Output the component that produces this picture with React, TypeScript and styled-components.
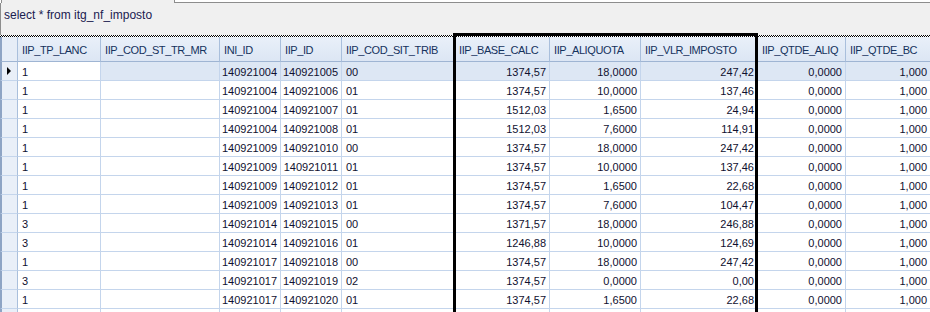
import React from "react";
import styled, { createGlobalStyle } from "styled-components";

const Global = createGlobalStyle`
  html, body { margin: 0; padding: 0; background: #ffffff; }
  body { font-family: "Liberation Sans", Arial, sans-serif; }
`;

const Page = styled.div`
  position: relative;
  width: 930px;
  height: 312px;
  overflow: hidden;
  background: #ffffff;
  display: flex;
  flex-direction: column;
`;

const TabStrip = styled.div`
  height: 3px;
  display: flex;
  flex: none;
`;

const ActiveTab = styled.div`
  width: 172px;
  margin-left: 1px;
  background: #f0f0f0;
  border-left: 1px solid #8d8d8d;
  border-right: 1px solid #8d8d8d;
`;

const TabRest = styled.div`
  flex: 1;
  background: #ffffff;
  border-bottom: 1px solid #8d8d8d;
  height: 2px;
`;

const Editor = styled.div`
  height: 32px;
  flex: none;
  background: #f0f0f0;
  border-left: 1px solid #8d8d8d;
  padding: 5px 0 0 3px;
  box-sizing: border-box;
  font-family: "Liberation Sans", Arial, sans-serif;
  font-size: 12px;
  color: #1a2050;
  line-height: 14px;
`;

const Splitter = styled.div`
  height: 2px;
  flex: none;
  background: repeating-conic-gradient(#000 0 25%, #fff 0 50%) 0 0 / 2px 2px;
`;

const COLS = "18px 83px 119px 61px 61px 113px 95px 91px 117px 88px 85px";

const Grid = styled.div`
  display: grid;
  grid-template-columns: ${COLS};
  grid-auto-rows: auto;
  font-family: "Liberation Sans", Arial, sans-serif;
  font-size: 11px;
`;

const HeaderCell = styled.div`
  height: 25px;
  box-sizing: border-box;
  border-right: 1px solid #a9bfdc;
  border-bottom: 1px solid #9fb5d3;
  background: linear-gradient(#e9f0f9, #dce6f4);
  color: #15325d;
  padding: 1px 0 0 4px;
  letter-spacing: -0.4px;
  display: flex;
  align-items: center;
  white-space: nowrap;
  overflow: hidden;
`;

const IndicatorHead = styled(HeaderCell)`
  padding: 0;
  border-left: 2px solid #8ea4c4;
  background: #e6edf7;
`;

const Indicator = styled.div`
  height: 19px;
  box-sizing: border-box;
  border-left: 2px solid #8ea4c4;
  border-right: 1px solid #a9bfdc;
  border-bottom: 1px solid #c4d5ec;
  background: #e9eff8;
  display: flex;
  align-items: center;
  padding-left: 5px;
`;

const Arrow = styled.span`
  width: 0;
  height: 0;
  border-top: 4px solid transparent;
  border-bottom: 4px solid transparent;
  border-left: 4px solid #000;
`;

const Cell = styled.div<{ $right?: boolean; $sel?: boolean }>`
  height: 19px;
  box-sizing: border-box;
  border-right: 1px solid #c4d5ec;
  border-bottom: 1px solid #c4d5ec;
  background: ${(p) => (p.$sel ? "#dde7f4" : "#ffffff")};
  color: #101030;
  display: flex;
  align-items: center;
  justify-content: ${(p) => (p.$right ? "flex-end" : "flex-start")};
  padding: ${(p) => (p.$right ? "1px 3px 0 0" : "1px 0 0 4px")};
  white-space: nowrap;
  overflow: hidden;
`;

const Frame = styled.div`
  position: absolute;
  left: 453px;
  top: 33px;
  width: 305px;
  height: 320px;
  box-sizing: border-box;
  border: 3px solid #000;
  pointer-events: none;
`;

const headers = [
  "IIP_TP_LANC",
  "IIP_COD_ST_TR_MR",
  "INI_ID",
  "IIP_ID",
  "IIP_COD_SIT_TRIB",
  "IIP_BASE_CALC",
  "IIP_ALIQUOTA",
  "IIP_VLR_IMPOSTO",
  "IIP_QTDE_ALIQ",
  "IIP_QTDE_BC",
];

const rightAligned = [false, false, true, true, false, true, true, true, true, true];

const raw: [string, string, string, string, string, string, string][] = [
  ["1", "140921004", "140921005", "00", "1374,57", "18,0000", "247,42"],
  ["1", "140921004", "140921006", "01", "1374,57", "10,0000", "137,46"],
  ["1", "140921004", "140921007", "01", "1512,03", "1,6500", "24,94"],
  ["1", "140921004", "140921008", "01", "1512,03", "7,6000", "114,91"],
  ["1", "140921009", "140921010", "00", "1374,57", "18,0000", "247,42"],
  ["1", "140921009", "140921011", "01", "1374,57", "10,0000", "137,46"],
  ["1", "140921009", "140921012", "01", "1374,57", "1,6500", "22,68"],
  ["1", "140921009", "140921013", "01", "1374,57", "7,6000", "104,47"],
  ["3", "140921014", "140921015", "00", "1371,57", "18,0000", "246,88"],
  ["3", "140921014", "140921016", "01", "1246,88", "10,0000", "124,69"],
  ["1", "140921017", "140921018", "00", "1374,57", "18,0000", "247,42"],
  ["3", "140921017", "140921019", "02", "1374,57", "0,0000", "0,00"],
  ["1", "140921017", "140921020", "01", "1374,57", "1,6500", "22,68"],
  ["", "", "", "", "", "", ""],
];

export default function App() {
  return (
    <>
      <Global />
      <Page>
        <TabStrip>
          <ActiveTab />
          <TabRest />
        </TabStrip>
        <Editor>select * from itg_nf_imposto</Editor>
        <Splitter />
        <Grid>
          <IndicatorHead />
          {headers.map((h) => (
            <HeaderCell key={h}>{h}</HeaderCell>
          ))}
          {raw.map((r, i) => {
            const empty = r[0] === "";
            const vals = empty
              ? ["", "", "", "", "", "", "", "", "", ""]
              : [r[0], "", r[1], r[2], r[3], r[4], r[5], r[6], "0,0000", "1,000"];
            return (
              <React.Fragment key={i}>
                <Indicator>{i === 0 && <Arrow />}</Indicator>
                {vals.map((v, j) => (
                  <Cell key={j} $right={rightAligned[j]} $sel={i === 0 && j > 0}>
                    {v}
                  </Cell>
                ))}
              </React.Fragment>
            );
          })}
        </Grid>
        <Frame />
      </Page>
    </>
  );
}
